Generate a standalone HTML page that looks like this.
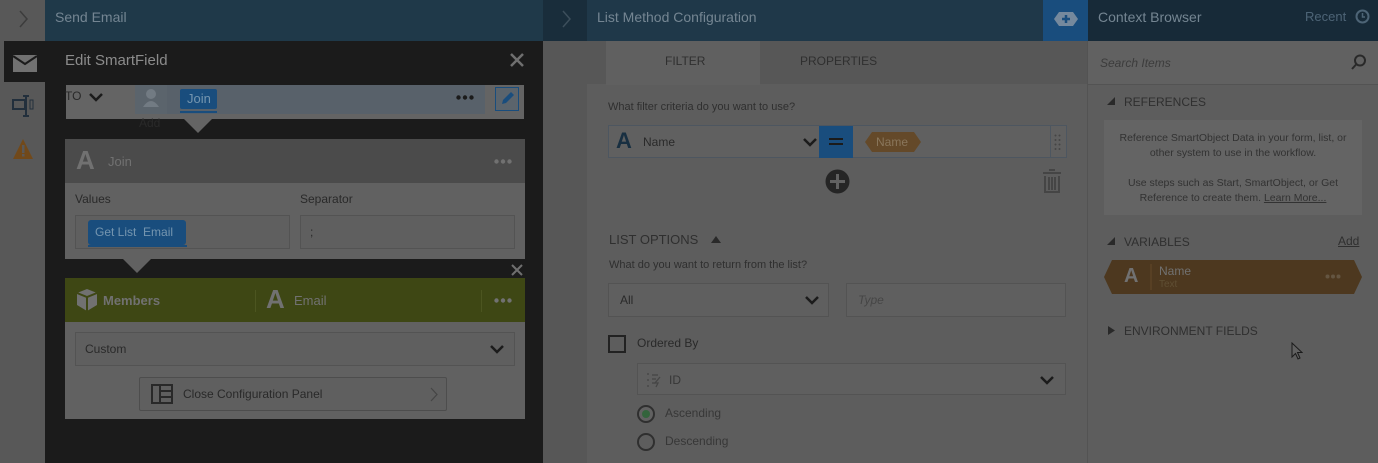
<!DOCTYPE html>
<html><head><meta charset="utf-8"><style>
*{margin:0;padding:0;box-sizing:border-box}
body{width:1378px;height:463px;overflow:hidden;background:#727272;font-family:"Liberation Sans",sans-serif;position:relative;color:#3a3a3a}
.a{position:absolute}
.t{position:absolute;white-space:nowrap}
.box{position:absolute;border:1px solid #666;background:#757575}
</style></head><body>
<!-- left strip -->
<div class="a" style="left:0;top:0;width:45px;height:463px;background:#6c6c6c"></div>
<svg class="a" style="left:19px;top:10px" width="10" height="18"><path d="M1 1L8 9L1 17" stroke="#4a4a4a" stroke-width="1.5" fill="none"/></svg>
<div class="a" style="left:45px;top:0;width:498px;height:41px;background:#26465a"></div>
<div class="t" style="left:55px;top:9px;font-size:14px;color:#8ea3b2">Send Email</div>
<!-- dark panel -->
<div class="a" style="left:45px;top:41px;width:498px;height:422px;background:#222"></div>
<div class="a" style="left:4px;top:41px;width:41px;height:41px;background:#222"></div>
<svg class="a" style="left:13px;top:55px" width="24" height="17"><rect width="24" height="17" fill="#8a8a8a"/><path d="M0 1 L12 9 L24 1" stroke="#222" stroke-width="2" fill="none"/></svg>
<svg class="a" style="left:12px;top:95px" width="22" height="22"><rect x="1" y="5" width="12" height="9" fill="none" stroke="#2a3a4a" stroke-width="2"/><path d="M14 1V21M11 1H17M11 21H17" stroke="#2a3a4a" stroke-width="2"/><rect x="18" y="5" width="3" height="9" fill="none" stroke="#2a3a4a"/></svg>
<svg class="a" style="left:12px;top:138px" width="22" height="22"><path d="M11 1 L21 21 H1Z" fill="#8a5a20"/><rect x="10" y="7" width="2.5" height="8" fill="#6c6c6c"/><rect x="10" y="16" width="2.5" height="2.5" fill="#6c6c6c"/></svg>
<div class="t" style="left:65px;top:52px;font-size:15px;color:#aaa">Edit SmartField</div>
<svg class="a" style="left:510px;top:53px" width="14" height="14"><path d="M1 1L13 13M13 1L1 13" stroke="#888" stroke-width="2.5"/></svg>
<!-- TO row -->
<div class="a" style="left:66px;top:85px;width:458px;height:34px;background:#7a7a7a"></div>
<div class="t" style="left:65px;top:89px;font-size:12px;color:#333">TO</div>
<svg class="a" style="left:89px;top:93px" width="14" height="9"><path d="M1 1L7 7L13 1" stroke="#222" stroke-width="2.5" fill="none"/></svg>
<div class="a" style="left:135px;top:85px;width:350px;height:29px;background:#6c7782"></div>
<div class="a" style="left:135px;top:85px;width:32px;height:29px;background:#707a84"></div>
<svg class="a" style="left:143px;top:87px" width="16" height="22"><circle cx="8" cy="7" r="5" fill="#8c96a0"/><path d="M0 20 Q8 8 16 20Z" fill="#8c96a0"/></svg>
<div class="a" style="left:180px;top:89px;width:37px;height:20px;background:#1f5f99;border-radius:2px"></div>
<div class="a" style="left:180px;top:111px;width:37px;height:2px;background:#1f5f99"></div>
<div class="t" style="left:187px;top:91px;font-size:13px;color:#8fb6d6">Join</div>
<svg class="a" style="left:456px;top:95px" width="18" height="5"><circle cx="2.5" cy="2.5" r="2.2" fill="#222"/><circle cx="9" cy="2.5" r="2.2" fill="#222"/><circle cx="15.5" cy="2.5" r="2.2" fill="#222"/></svg>
<div class="a" style="left:495px;top:87px;width:24px;height:24px;border:1px solid #1f5f99;background:#707a84"></div>
<svg class="a" style="left:500px;top:91px" width="15" height="15"><path d="M2 13L3 9L11 1L14 4L6 12Z" fill="#1f5f99"/></svg>
<div class="t" style="left:139px;top:116px;font-size:12px;color:#333">Add</div>
<div class="a" style="left:184px;top:119px;border-left:14px solid transparent;border-right:14px solid transparent;border-top:14px solid #7a7a7a"></div>
<!-- Join card -->
<div class="a" style="left:65px;top:139px;width:460px;height:44px;background:#5c5c5c"></div>
<div class="t" style="left:76px;top:145px;font-size:26px;font-weight:bold;color:#8a8a8a">A</div>
<div class="t" style="left:108px;top:154px;font-size:13px;color:#8a8a8a">Join</div>
<svg class="a" style="left:494px;top:159px" width="18" height="5"><circle cx="2.5" cy="2.5" r="2.2" fill="#8a8a8a"/><circle cx="9" cy="2.5" r="2.2" fill="#8a8a8a"/><circle cx="15.5" cy="2.5" r="2.2" fill="#8a8a8a"/></svg>
<div class="a" style="left:65px;top:183px;width:460px;height:76px;background:#777"></div>
<div class="t" style="left:75px;top:192px;font-size:12px;color:#333">Values</div>
<div class="t" style="left:300px;top:192px;font-size:12px;color:#333">Separator</div>
<div class="box" style="left:75px;top:215px;width:215px;height:34px"></div>
<div class="box" style="left:300px;top:215px;width:215px;height:34px"></div>
<div class="t" style="left:310px;top:225px;font-size:12px;color:#333">;</div>
<div class="a" style="left:88px;top:220px;width:98px;height:25px;background:#1f5f99;border-radius:3px"></div>
<div class="a" style="left:88px;top:245px;width:99px;height:2px;background:#1f5f99"></div>
<div class="t" style="left:95px;top:225px;font-size:12px;color:#8fb6d6">Get List&nbsp; Email</div>
<div class="a" style="left:123px;top:259px;border-left:14px solid transparent;border-right:14px solid transparent;border-top:14px solid #777"></div>
<svg class="a" style="left:511px;top:264px" width="12" height="12"><path d="M1 1L11 11M11 1L1 11" stroke="#888" stroke-width="2"/></svg>
<!-- olive card -->
<div class="a" style="left:65px;top:278px;width:460px;height:44px;background:#4c5719"></div>
<svg class="a" style="left:76px;top:288px" width="22" height="24"><path d="M11 1 L21 5 V17 L11 23 L1 17 V5Z" fill="#8a8a8a"/><path d="M1 5 L11 9 L21 5 M11 9V23" stroke="#4c5719" stroke-width="2" fill="none"/></svg>
<div class="t" style="left:103px;top:293px;font-size:13px;color:#8a8a8a;font-weight:bold">Members</div>
<div class="a" style="left:255px;top:290px;width:1px;height:22px;background:#5d6828"></div>
<div class="t" style="left:266px;top:284px;font-size:26px;font-weight:bold;color:#8a8a8a">A</div>
<div class="t" style="left:294px;top:293px;font-size:13px;color:#8a8a8a">Email</div>
<div class="a" style="left:481px;top:290px;width:1px;height:22px;background:#5d6828"></div>
<svg class="a" style="left:494px;top:298px" width="18" height="5"><circle cx="2.5" cy="2.5" r="2.2" fill="#8a8a8a"/><circle cx="9" cy="2.5" r="2.2" fill="#8a8a8a"/><circle cx="15.5" cy="2.5" r="2.2" fill="#8a8a8a"/></svg>
<div class="a" style="left:65px;top:322px;width:460px;height:97px;background:#777"></div>
<div class="box" style="left:75px;top:332px;width:440px;height:34px"></div>
<div class="t" style="left:85px;top:342px;font-size:12px;color:#333">Custom</div>
<svg class="a" style="left:490px;top:345px" width="14" height="9"><path d="M1 1L7 7L13 1" stroke="#222" stroke-width="2.5" fill="none"/></svg>
<div class="a" style="left:139px;top:377px;width:308px;height:34px;background:#747474;border:1px solid #5e5e5e;border-radius:2px"></div>
<svg class="a" style="left:151px;top:384px" width="22" height="20"><rect x="1" y="1" width="20" height="18" fill="none" stroke="#333" stroke-width="2"/><path d="M9 1V19M9 7H21M9 13H21" stroke="#333" stroke-width="2"/></svg>
<div class="t" style="left:183px;top:387px;font-size:12px;color:#333">Close Configuration Panel</div>
<svg class="a" style="left:430px;top:387px" width="8" height="15"><path d="M1 1L7 7.5L1 14" stroke="#555" stroke-width="1.2" fill="none"/></svg>
<!-- middle -->
<div class="a" style="left:543px;top:0;width:44px;height:41px;background:#1f3848"></div>
<svg class="a" style="left:562px;top:10px" width="10" height="18"><path d="M1 1L8 9L1 17" stroke="#4a6070" stroke-width="1.5" fill="none"/></svg>
<div class="a" style="left:587px;top:0;width:456px;height:41px;background:#26455a"></div>
<div class="t" style="left:597px;top:9px;font-size:14px;color:#8ea3b2">List Method Configuration</div>
<div class="a" style="left:1043px;top:0;width:45px;height:41px;background:#1f5f99"></div>
<svg class="a" style="left:1054px;top:12px" width="24" height="14"><path d="M5 0H19L24 7L19 14H5L0 7Z" fill="#8fa8c0"/><path d="M12 3V11M8 7H16" stroke="#1f5f99" stroke-width="2.5"/></svg>
<div class="a" style="left:543px;top:41px;width:44px;height:422px;background:#6b6b6b"></div>
<div class="a" style="left:587px;top:41px;width:501px;height:43px;background:#6b6b6b"></div>
<div class="a" style="left:606px;top:41px;width:154px;height:44px;background:#767676"></div>
<div class="t" style="left:665px;top:54px;font-size:12px;color:#3a3a3a">FILTER</div>
<div class="t" style="left:800px;top:54px;font-size:12px;color:#3a3a3a">PROPERTIES</div>
<div class="t" style="left:608px;top:101px;font-size:11px;color:#3a3a3a">What filter criteria do you want to use?</div>
<div class="a" style="left:608px;top:125px;width:459px;height:33px;background:#767676;border:1px solid #5e6a76"></div>
<div class="t" style="left:616px;top:128px;font-size:22px;font-weight:bold;color:#1e3a50">A</div>
<div class="t" style="left:643px;top:135px;font-size:12px;color:#333">Name</div>
<svg class="a" style="left:803px;top:138px" width="14" height="9"><path d="M1 1L7 7L13 1" stroke="#222" stroke-width="2.5" fill="none"/></svg>
<div class="a" style="left:819px;top:126px;width:34px;height:32px;background:#1f5f99"></div>
<div class="a" style="left:829px;top:138px;width:14px;height:2px;background:#222"></div>
<div class="a" style="left:829px;top:143px;width:14px;height:2px;background:#222"></div>
<svg class="a" style="left:865px;top:132px" width="56" height="20"><path d="M7 0H49L56 10L49 20H7L0 10Z" fill="#7a5a32"/></svg>
<div class="t" style="left:876px;top:135px;font-size:12px;color:#a89070">Name</div>
<div class="a" style="left:1050px;top:126px;width:1px;height:32px;background:#5e6a76"></div>
<svg class="a" style="left:1054px;top:134px" width="7" height="16"><g fill="#555"><circle cx="1.5" cy="1.5" r="1"/><circle cx="5.5" cy="1.5" r="1"/><circle cx="1.5" cy="6" r="1"/><circle cx="5.5" cy="6" r="1"/><circle cx="1.5" cy="10.5" r="1"/><circle cx="5.5" cy="10.5" r="1"/><circle cx="1.5" cy="15" r="1"/><circle cx="5.5" cy="15" r="1"/></g></svg>
<svg class="a" style="left:825px;top:169px" width="25" height="25"><circle cx="12.5" cy="12.5" r="12" fill="#2e2e2e"/><path d="M12.5 5V20M5 12.5H20" stroke="#777" stroke-width="3"/></svg>
<svg class="a" style="left:1042px;top:169px" width="20" height="24"><path d="M1 4H19M7 1H13" stroke="#555" stroke-width="2"/><path d="M3 7V23H17V7M7 8V21M10 8V21M13 8V21" stroke="#555" stroke-width="2" fill="none"/></svg>
<div class="t" style="left:609px;top:232px;font-size:13px;color:#3a3a3a">LIST OPTIONS</div>
<svg class="a" style="left:711px;top:236px" width="10" height="7"><path d="M0 7L5 0L10 7Z" fill="#333"/></svg>
<div class="t" style="left:609px;top:259px;font-size:11px;color:#3a3a3a">What do you want to return from the list?</div>
<div class="box" style="left:608px;top:283px;width:221px;height:34px"></div>
<div class="t" style="left:620px;top:293px;font-size:12px;color:#333">All</div>
<svg class="a" style="left:805px;top:296px" width="14" height="9"><path d="M1 1L7 7L13 1" stroke="#222" stroke-width="2.5" fill="none"/></svg>
<div class="box" style="left:846px;top:283px;width:220px;height:34px"></div>
<div class="t" style="left:858px;top:293px;font-size:12px;color:#555;font-style:italic">Type</div>
<div class="a" style="left:608px;top:335px;width:18px;height:18px;border:2px solid #2a2a2a"></div>
<div class="t" style="left:637px;top:336px;font-size:12px;color:#333">Ordered By</div>
<div class="box" style="left:637px;top:363px;width:429px;height:32px"></div>
<svg class="a" style="left:646px;top:372px" width="16" height="16"><path d="M1 2H3M1 8H3M1 14H3M6 3H12M6 7H10M6 11H9" stroke="#555" stroke-width="1.3"/><path d="M14 5L9 11H12L10 15" stroke="#555" stroke-width="1.3" fill="none"/></svg>
<div class="t" style="left:669px;top:373px;font-size:12px;color:#444">ID</div>
<svg class="a" style="left:1040px;top:376px" width="14" height="9"><path d="M1 1L7 7L13 1" stroke="#222" stroke-width="2.5" fill="none"/></svg>
<div class="a" style="left:637px;top:405px;width:18px;height:18px;border:2px solid #3a3a3a;border-radius:50%;background:#777"></div>
<div class="a" style="left:642px;top:410px;width:8px;height:8px;border-radius:50%;background:#3f7a4a"></div>
<div class="t" style="left:665px;top:406px;font-size:12px;color:#444">Ascending</div>
<div class="a" style="left:637px;top:433px;width:18px;height:18px;border:2px solid #3a3a3a;border-radius:50%"></div>
<div class="t" style="left:665px;top:434px;font-size:12px;color:#444">Descending</div>
<!-- right -->
<div class="a" style="left:1088px;top:0;width:290px;height:41px;background:#1d3445"></div>
<div class="a" style="left:1087px;top:41px;width:1px;height:422px;background:#666"></div>
<div class="t" style="left:1098px;top:9px;font-size:14px;color:#8ea3b2">Context Browser</div>
<div class="t" style="left:1305px;top:9px;font-size:13px;color:#5f7a90">Recent</div>
<svg class="a" style="left:1355px;top:9px" width="15" height="15"><circle cx="7.5" cy="7.5" r="6" fill="none" stroke="#5f7a90" stroke-width="2"/><path d="M7.5 4V8H10" stroke="#5f7a90" stroke-width="1.5" fill="none"/></svg>
<div class="a" style="left:1088px;top:41px;width:290px;height:44px;background:#777;border-bottom:1px solid #666"></div>
<div class="t" style="left:1100px;top:56px;font-size:12px;color:#4a4a4a;font-style:italic">Search Items</div>
<svg class="a" style="left:1351px;top:54px" width="16" height="16"><circle cx="9" cy="6.5" r="5" fill="none" stroke="#333" stroke-width="2"/><path d="M5.5 10L1 15" stroke="#333" stroke-width="2"/></svg>
<svg class="a" style="left:1107px;top:97px" width="8" height="8"><path d="M8 0V8H0Z" fill="#333"/></svg>
<div class="t" style="left:1124px;top:95px;font-size:12px;color:#3a3a3a">REFERENCES</div>
<div class="a" style="left:1104px;top:120px;width:258px;height:95px;background:#7a7a7a"></div>
<div class="t" style="left:1112px;top:131px;width:242px;text-align:center;font-size:10.5px;line-height:15px;color:#3e3e3e;white-space:normal">Reference SmartObject Data in your form, list, or other system to use in the workflow.<br><br>Use steps such as Start, SmartObject, or Get Reference to create them. <u>Learn More...</u></div>
<svg class="a" style="left:1107px;top:237px" width="8" height="8"><path d="M8 0V8H0Z" fill="#333"/></svg>
<div class="t" style="left:1124px;top:235px;font-size:12px;color:#3a3a3a">VARIABLES</div>
<div class="t" style="left:1338px;top:234px;font-size:12px;color:#3a3a3a;text-decoration:underline">Add</div>
<svg class="a" style="left:1104px;top:260px" width="258" height="34"><path d="M8 0H250L258 17L250 34H8L0 17Z" fill="#5f4526"/><path d="M47 4V30" stroke="#7a5a32"/></svg>
<div class="t" style="left:1124px;top:265px;font-size:20px;font-weight:bold;color:#8a8a8a">A</div>
<div class="t" style="left:1159px;top:264px;font-size:12px;color:#8a8a8a">Name</div>
<div class="t" style="left:1159px;top:279px;font-size:10px;color:#74603f">Text</div>
<svg class="a" style="left:1325px;top:274px" width="16" height="5"><circle cx="2.5" cy="2.5" r="2" fill="#7a6850"/><circle cx="8" cy="2.5" r="2" fill="#7a6850"/><circle cx="13.5" cy="2.5" r="2" fill="#7a6850"/></svg>
<svg class="a" style="left:1108px;top:326px" width="7" height="9"><path d="M0 0L7 4.5L0 9Z" fill="#333"/></svg>
<div class="t" style="left:1124px;top:324px;font-size:12px;color:#3a3a3a">ENVIRONMENT FIELDS</div>
<svg class="a" style="left:1291px;top:342px" width="12" height="18"><path d="M1 1V15L4.5 11.5L7 17L9 16L6.5 10.5H11Z" fill="#777" stroke="#222"/></svg>
<div class="a" style="left:0;top:0;width:1378px;height:463px;background:rgba(0,0,0,0.18)"></div>
</body></html>
